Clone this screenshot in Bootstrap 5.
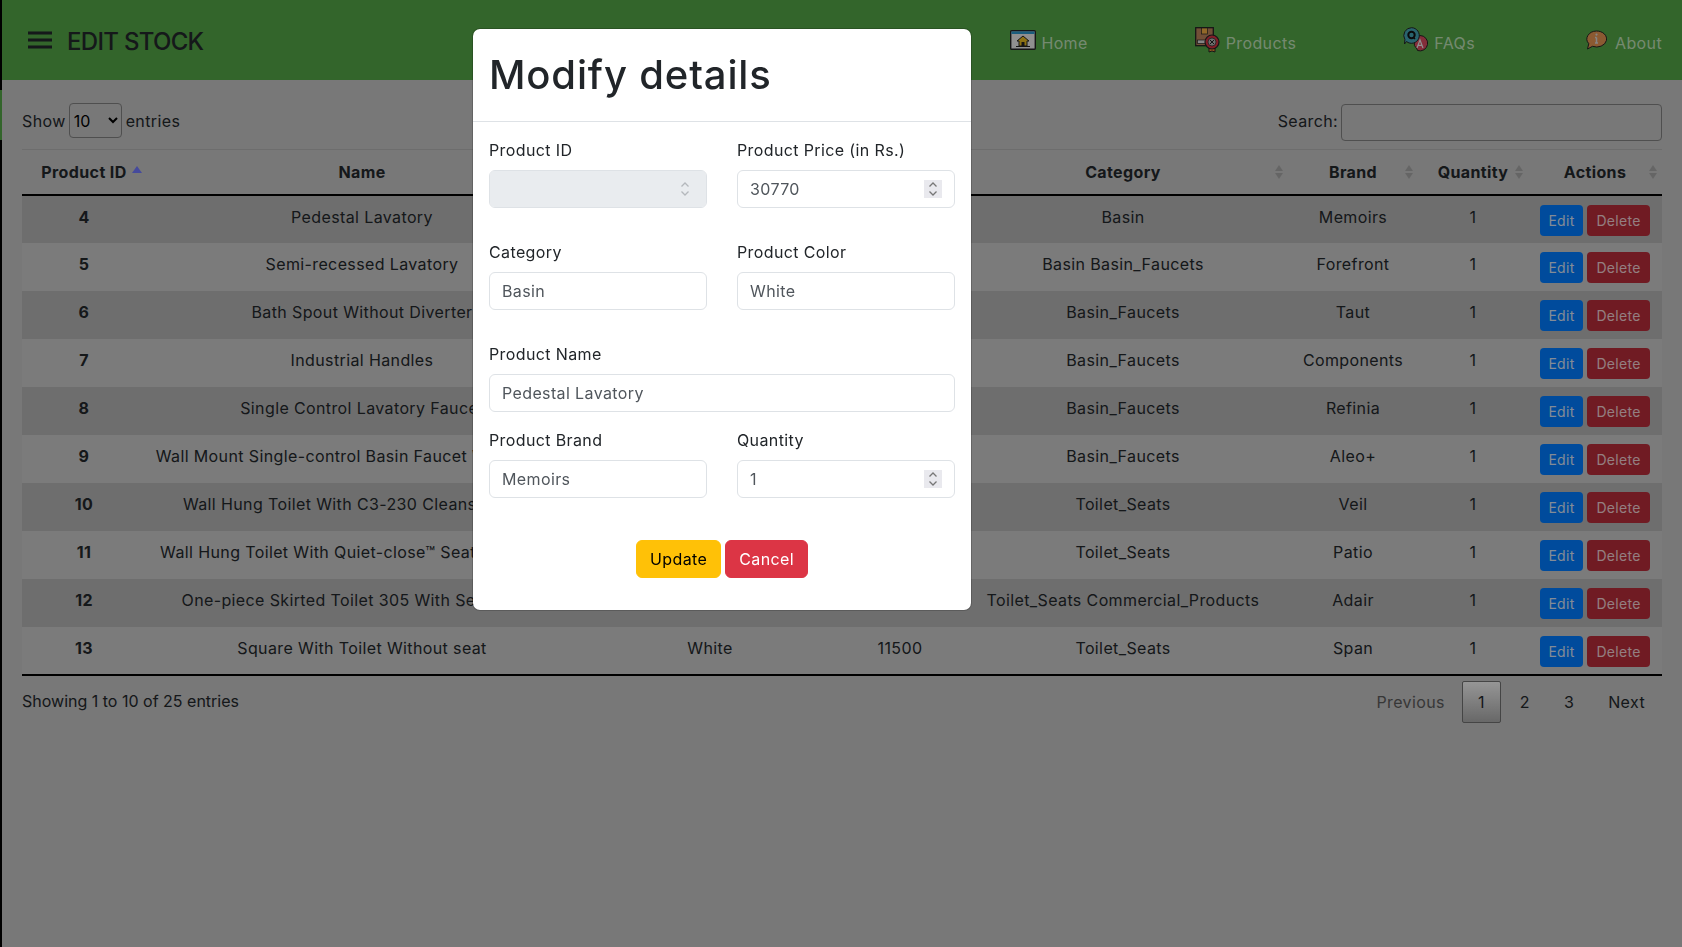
<!DOCTYPE html>
<html lang="en">
<head>
    <meta charset="UTF-8">
    <meta name="viewport" content="width=device-width, initial-scale=1.0">
    <title>Edit Stock</title>
    <link rel="stylesheet" href="https://cdn.jsdelivr.net/npm/bootstrap@5.3.0/dist/css/bootstrap.min.css">
    <style>
        html, body { height: 100%; }
        body {
            font-family: "Inter", "Liberation Sans", sans-serif;
            background: #000;
            color: #212529;
            overflow: hidden;
            letter-spacing: .38px;
        }
        .page-wrap { margin-left: 2px; background: #b8b8b8; min-height: 100%; }
        .side-tick { position: absolute; left: 0; top: 90px; width: 2px; height: 50px; background: #4f9b42; }

        .top-bar { height: 80px; background: #4f9b42; padding: 0 20px 0 26px; }
        .burger { width: 24px; height: 18px; margin-right: 15px; }
        .top-title { font-size: 24px; font-weight: 500; color: #212529; margin: 0; padding-top: 3px; line-height: 1; letter-spacing: -.7px; }
        .top-link { color: rgba(255,255,255,.58); font-size: 16px; text-decoration: none; display: flex; align-items: center; gap: 5px; padding-top: 5px; }
        .top-link svg { display: block; margin-top: -6px; }
        .link-products { margin-left: 107px; }
        .link-faqs { margin-left: 107px; }
        .link-about { margin-left: 110px; gap: 8px; }

        .stock-area { padding: 0 0 0 20px; width: 1660px; }
        .stock-controls { height: 70px; padding-top: 12px; font-size: 16px; border-bottom: 1px solid #a8a8a8; }
        .len-select { width: 53px; height: 35px; padding: 0; border: 1px solid #7a7a7a; border-radius: 4px; background-color: transparent; font-size: 16px; margin: 0 4px 0 3px; }
        .search-box { width: 321px; height: 37px; border: 1px solid #7a7a7a; border-radius: 4px; background: transparent; margin: 4px 0 0 3px; }

        .stock-table { table-layout: fixed; width: 1640px; margin: 0; font-size: 16px; text-align: center; border-collapse: collapse; }
        .stock-table th { height: 45px; vertical-align: middle; font-weight: 700; border-bottom: 2px solid #000; position: relative; padding: 0 8px; background: transparent; }
        .stock-table td { height: 48px; padding: 9px 4px 0; vertical-align: top; background: transparent; border: 0; white-space: nowrap; }
        .stock-table tbody tr:nth-child(odd) td { background: #aaaaaa; }
        .stock-table tbody tr:nth-child(even) td { background: #bdbdbd; }
        .stock-table tbody tr:last-child td { border-bottom: 2px solid #000; }
        .stock-table td.act-cell { padding: 9px 0 0; }
        .c-id { width: 124px; } .c-name { width: 432px; } .c-color { width: 264px; } .c-price { width: 116px; }
        .c-cat { width: 330px; } .c-brand { width: 130px; } .c-qty { width: 110px; } .c-act { width: 134px; }
        .sort-arrows { position: absolute; right: 5px; top: 15px; width: 8px; height: 14px; }
        .sort-up { right: auto; left: 110px; top: 16px; width: 10px; height: 7px; }

        .act-btn { font-size: 14px; height: 31px; padding: 0; line-height: 31px; border-radius: 4px; border: 0; margin-right: 4px; letter-spacing: .3px; }
        .edit-btn { background: #0074f0; color: #c9d6e6; width: 43px; }
        .del-btn { background: #ad2a37; color: #e2c3c6; margin-right: 0; width: 63px; }

        .table-foot { font-size: 16px; padding-top: 5px; width: 1640px; }
        .foot-info { letter-spacing: 0; }
        .page-lnk { height: 42px; padding: 0 16px; display: flex; align-items: center; color: #212529; border: 1px solid transparent; border-radius: 2px; }
        .page-lnk.is-off { color: #555; }
        .page-lnk.is-on { padding: 0 15px; margin-right: 2px; background: linear-gradient(to bottom, #e6e6e6 0%, #a0a0a0 100%); border-color: #6a6a6a; }

        .modal-backdrop { --bs-backdrop-opacity: .35; }
        .edit-dialog { margin-left: 472px; margin-top: 28px; }
        .edit-title { font-size: 40px; font-weight: 500; line-height: 60px; margin: 0; letter-spacing: .85px; }
        .edit-row { --bs-gutter-x: 30px; }
        .edit-body { padding: 16px 16px 32px; }
        .edit-body .form-label { margin-bottom: 8px; }
        .edit-body .form-control { color: #50565c; letter-spacing: .38px; }
        .edit-body .btn { letter-spacing: .38px; padding-left: 13px; padding-right: 13px; }
        .edit-body input[type=number]::-webkit-inner-spin-button {
            -webkit-appearance: none;
            opacity: 1;
            width: 18px;
            height: 18px;
            margin-top: 3px;
            background: #e9e9ee url("data:image/svg+xml,%3Csvg xmlns='http://www.w3.org/2000/svg' viewBox='0 0 18 18'%3E%3Cpath d='M5.500 6.500 9 3l3.500 3.500M5.500 11.500 9 15l3.500-3.500' fill='none' stroke='%23777' stroke-width='1.300'/%3E%3C/svg%3E") center no-repeat;
        }
        .edit-body input[type=number]:disabled::-webkit-inner-spin-button {
            background: transparent url("data:image/svg+xml,%3Csvg xmlns='http://www.w3.org/2000/svg' viewBox='0 0 18 18'%3E%3Cpath d='M5.500 6.500 9 3l3.500 3.500M5.500 11.500 9 15l3.500-3.500' fill='none' stroke='%23b4b8bc' stroke-width='1.300'/%3E%3C/svg%3E") center no-repeat;
        }
        .field-gap { margin-bottom: 32px; }
        .field-gap-sm { margin-bottom: 16px; }
        .edit-actions { margin-top: 42px; }
    </style>
</head>
<body>
    <div class="side-tick"></div>
    <div class="page-wrap">
        <nav class="top-bar d-flex align-items-center justify-content-between">
            <div class="d-flex align-items-center">
                <svg class="burger" viewBox="0 0 24 18"><path d="M0 2h24M0 9h24M0 16h24" stroke="#212529" stroke-width="3"/></svg>
                <h1 class="top-title">EDIT STOCK</h1>
            </div>
            <div class="d-flex align-items-center">
                <a class="top-link" href="#">
                    <svg width="26" height="20" viewBox="0 0 26 20"><rect x=".7" y=".7" width="24.600" height="18.600" rx="1" fill="#ddd" stroke="#222" stroke-width="1.400"/><rect x="1.400" y="1.400" width="23.200" height="2.600" fill="#2a8fc0"/><path d="M7 11 13 6l6 5h-2v5H9v-5z" fill="#d8b020" stroke="#222"/><path d="M6 16.500h14" stroke="#222"/><rect x="11.500" y="12" width="3" height="4" fill="#222"/></svg>
                    Home</a>
                <a class="top-link link-products" href="#">
                    <svg width="26" height="26" viewBox="0 0 26 26"><rect x=".7" y=".7" width="17.600" height="18" fill="#b07a55" stroke="#222" stroke-width="1.300"/><rect x="6.500" y="1" width="6" height="6" fill="#e0a040" stroke="#222" stroke-width=".7"/><rect x="2.500" y="13" width="9" height="3.500" fill="#ccc" stroke="#222" stroke-width=".7"/><path d="M14 20v5l3-1 3 1v-5z" fill="#e08030" stroke="#222"/><circle cx="17" cy="15" r="7" fill="#c82f3f" stroke="#222" stroke-width="1.200"/><circle cx="17" cy="15" r="4" fill="#aaa" stroke="#222" stroke-width=".7"/><path d="m15 13 4 4m0-4-4 4" stroke="#222"/></svg>
                    Products</a>
                <a class="top-link link-faqs" href="#">
                    <svg width="26" height="25" viewBox="0 0 26 25"><path d="M17 8.500a7.700 7.700 0 1 1-2.500 15l-.5-1.500a7.700 7.700 0 0 1 3-13.500z" fill="#c9485a" stroke="#222"/><path d="m14 21 3-8 3 8m-5-2.700h4" fill="none" stroke="#ddd" stroke-width="1.200"/><path d="M8.500.7a7.800 7.800 0 1 1-5 13.800L1.500 17l.4-4.500A7.800 7.800 0 0 1 8.500.7z" fill="#3f9aaa" stroke="#222"/><circle cx="8.500" cy="8" r="3.200" fill="none" stroke="#111" stroke-width="2"/><path d="m10 10 2 2" stroke="#111" stroke-width="1.500"/></svg>
                    FAQs</a>
                <a class="top-link link-about" href="#">
                    <svg width="22" height="20" viewBox="0 0 22 20"><path d="M11.500 1a10 8 0 1 1-4 15.300L2.500 19l1.300-5.300A10 8 0 0 1 11.500 1z" fill="#d68a4d" stroke="#222"/><path d="M11.500 7.500v5.500M10 13h3M10 7.500h1.500" fill="none" stroke="#ccc" stroke-width="1.500"/><circle cx="11.500" cy="4.600" r="1.100" fill="#ccc"/></svg>
                    About</a>
            </div>
        </nav>

        <main class="stock-area">
            <div class="stock-controls d-flex align-items-center justify-content-between">
                <label class="d-flex align-items-center">Show
                    <select class="len-select"><option>10</option></select>
                    entries</label>
                <label class="d-flex align-items-center">Search:<input class="search-box" type="search"></label>
            </div>

            <table class="table stock-table">
                <colgroup>
                    <col class="c-id"><col class="c-name"><col class="c-color"><col class="c-price">
                    <col class="c-cat"><col class="c-brand"><col class="c-qty"><col class="c-act">
                </colgroup>
                <thead>
                    <tr id="stock-head"></tr>
                </thead>
                <tbody id="stock-rows"></tbody>
            </table>

            <div class="table-foot d-flex justify-content-between align-items-start">
                <div class="foot-info pt-2">Showing 1 to 10 of 25 entries</div>
                <div class="d-flex">
                    <span class="page-lnk is-off">Previous</span>
                    <span class="page-lnk is-on">1</span>
                    <span class="page-lnk">2</span>
                    <span class="page-lnk">3</span>
                    <span class="page-lnk">Next</span>
                </div>
            </div>
        </main>
    </div>

    <div class="modal-backdrop show"></div>
    <div class="modal d-block" tabindex="-1">
        <div class="modal-dialog edit-dialog">
            <div class="modal-content">
                <div class="modal-header">
                    <h2 class="edit-title">Modify details</h2>
                </div>
                <div class="edit-body">
                    <div class="row edit-row field-gap">
                        <div class="col-6"><label class="form-label">Product ID</label><input class="form-control" type="number" disabled></div>
                        <div class="col-6"><label class="form-label">Product Price (in Rs.)</label><input class="form-control" type="number" value="30770"></div>
                    </div>
                    <div class="row edit-row field-gap">
                        <div class="col-6"><label class="form-label">Category</label><input class="form-control" type="text" value="Basin"></div>
                        <div class="col-6"><label class="form-label">Product Color</label><input class="form-control" type="text" value="White"></div>
                    </div>
                    <div class="field-gap-sm"><label class="form-label">Product Name</label><input class="form-control" type="text" value="Pedestal Lavatory"></div>
                    <div class="row edit-row">
                        <div class="col-6"><label class="form-label">Product Brand</label><input class="form-control" type="text" value="Memoirs"></div>
                        <div class="col-6"><label class="form-label">Quantity</label><input class="form-control" type="number" value="1"></div>
                    </div>
                    <div class="edit-actions d-flex justify-content-center gap-1">
                        <button class="btn btn-warning" type="button">Update</button>
                        <button class="btn btn-danger" type="button">Cancel</button>
                    </div>
                </div>
            </div>
        </div>
    </div>

    <script>
        const heads = ['Product ID', 'Name', 'Color', 'Price', 'Category', 'Brand', 'Quantity', 'Actions'];
        const stock = [
            [4, 'Pedestal Lavatory', 'White', 30770, 'Basin', 'Memoirs'],
            [5, 'Semi-recessed Lavatory', 'White', 13200, 'Basin Basin_Faucets', 'Forefront'],
            [6, 'Bath Spout Without Diverter', 'Chrome', 4500, 'Basin_Faucets', 'Taut'],
            [7, 'Industrial Handles', 'Chrome', 2300, 'Basin_Faucets', 'Components'],
            [8, 'Single Control Lavatory Faucet', 'Chrome', 8900, 'Basin_Faucets', 'Refinia'],
            [9, 'Wall Mount Single-control Basin Faucet With Handle', 'Chrome', 9700, 'Basin_Faucets', 'Aleo+'],
            [10, 'Wall Hung Toilet With C3-230 Cleansing Seat', 'White', 85000, 'Toilet_Seats', 'Veil'],
            [11, 'Wall Hung Toilet With Quiet-close™ Seat And Cover', 'White', 62000, 'Toilet_Seats', 'Patio'],
            [12, 'One-piece Skirted Toilet 305 With Seat Cover', 'White', 41000, 'Toilet_Seats Commercial_Products', 'Adair'],
            [13, 'Square With Toilet Without seat', 'White', 11500, 'Toilet_Seats', 'Span']
        ];

        const arrows = '<svg class="sort-arrows" viewBox="0 0 8 14"><path d="M4 0l4 6H0zM4 14 0 8h8z" fill="#000" opacity=".15"/></svg>';
        const upArrow = '<svg class="sort-arrows sort-up" viewBox="0 0 10 7"><path d="M5 0l5 7H0z" fill="#6b72f0"/></svg>';

        document.getElementById('stock-head').innerHTML = heads.map((h, i) =>
            `<th>${h}${i === 0 ? upArrow : (i === 1 ? '' : arrows)}</th>`).join('');

        document.getElementById('stock-rows').innerHTML = stock.map(r => `
            <tr>
                <td class="fw-bold">${r[0]}</td>
                <td>${r[1]}</td>
                <td>${r[2]}</td>
                <td>${r[3]}</td>
                <td>${r[4]}</td>
                <td>${r[5]}</td>
                <td>1</td>
                <td class="act-cell"><button class="act-btn edit-btn" type="button">Edit</button><button class="act-btn del-btn" type="button">Delete</button></td>
            </tr>`).join('');
    </script>
    <script src="https://cdn.jsdelivr.net/npm/bootstrap@5.3.0/dist/js/bootstrap.bundle.min.js"></script>
</body>
</html>
